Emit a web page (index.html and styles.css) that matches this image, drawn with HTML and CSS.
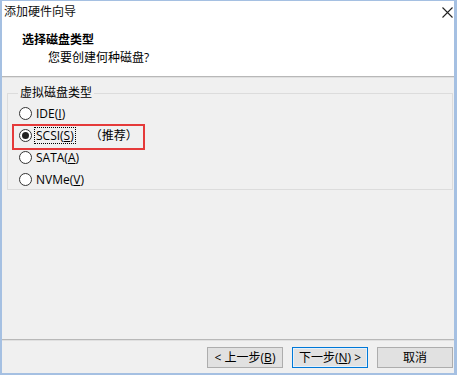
FILE: index.html
```html
<!DOCTYPE html>
<html lang="zh-CN">
<head>
<meta charset="utf-8">
<title>添加硬件向导</title>
<link rel="stylesheet" href="styles.css">
</head>
<body>
<div class="window">
  <div class="header">
    <div class="titlebar">
      <span class="title">添加硬件向导</span>
      <svg class="close" width="11" height="11" viewBox="0 0 11 11"><path d="M0.5 0.5 L10.5 10.5 M10.5 0.5 L0.5 10.5" stroke="#222" stroke-width="1.1" fill="none"/></svg>
    </div>
    <div class="heading">选择磁盘类型</div>
    <div class="subheading">您要创建何种磁盘?</div>
  </div>
  <div class="sep"></div>
  <div class="body">
    <fieldset class="group">
      <legend>虚拟磁盘类型</legend>
      <div class="row"><span class="radio"></span><span class="label">IDE(<u>I</u>)</span></div>
      <div class="row"><span class="radio checked"></span><span class="label focus">SCSI(<u>S</u>)</span><span class="rec">（推荐）</span></div>
      <div class="row"><span class="radio"></span><span class="label">SATA(<u>A</u>)</span></div>
      <div class="row"><span class="radio"></span><span class="label">NVMe(<u>V</u>)</span></div>
      <div class="highlight"></div>
    </fieldset>
  </div>
  <div class="sep"></div>
  <div class="footer">
    <button class="btn">&lt; 上一步(<u>B</u>)</button>
    <button class="btn primary">下一步(<u>N</u>) &gt;</button>
    <button class="btn">取消</button>
  </div>
</div>
</body>
</html>
```
FILE: styles.css
```css
html, body {
  margin: 0;
  padding: 0;
  background: #f0f0f0;
}
body {
  font-family: "Open Sans", "Noto Sans CJK SC", sans-serif;
  font-size: 12px;
  color: #000;
}
.window {
  width: 457px;
  height: 375px;
  box-sizing: border-box;
  border: 2px solid #a5c0e2;
  border-top-width: 1px;
  border-right-width: 3px;
  display: flex;
  flex-direction: column;
  background: #f0f0f0;
}
.header {
  background: #fff;
  height: 75px;
  flex: none;
}
.titlebar {
  display: flex;
  justify-content: space-between;
  align-items: center;
  height: 22px;
  padding: 0 1px 0 2px;
}
.title {
  line-height: 22px;
  color: #111;
}
.heading {
  font-weight: bold;
  margin: 9px 0 0 20px;
  line-height: 16px;
}
.subheading {
  margin: 2px 0 0 46px;
  line-height: 16px;
}
.sep {
  flex: none;
  height: 1px;
  border-top: 1px solid #b8b8b8;
  background: #e0e0e0;
}
.body {
  flex: 1;
  padding: 7px 0 0 5px;
}
.group {
  position: relative;
  margin: 0;
  width: 446px;
  height: 105px;
  box-sizing: border-box;
  border: 1px solid #dcdcdc;
  padding: 1px 0 0 11px;
}
.group legend {
  padding: 0 2px;
  margin-left: -1px;
  line-height: 16px;
}
.row {
  display: flex;
  align-items: center;
  height: 22px;
}
.radio {
  width: 11px;
  height: 11px;
  border: 1px solid #333;
  border-radius: 50%;
  background: #fff;
  box-sizing: content-box;
  display: flex;
  align-items: center;
  justify-content: center;
  margin-right: 3px;
}
.radio.checked::after {
  content: "";
  width: 7px;
  height: 7px;
  border-radius: 50%;
  background: #222;
}
.label {
  line-height: 15px;
  padding: 0 1px;
}
.label.focus {
  outline: 1px dotted #000;
}
.rec {
  margin-left: 15px;
}
.highlight {
  position: absolute;
  left: 4px;
  top: 23px;
  width: 133px;
  height: 26px;
  box-sizing: border-box;
  border: 2px solid #e53a3a;
}
.footer {
  flex: none;
  height: 32px;
  display: flex;
  justify-content: flex-end;
  align-items: flex-start;
  gap: 9px;
  padding: 6px 1px 0 0;
  box-sizing: border-box;
}
.btn {
  width: 76px;
  height: 21px;
  box-sizing: border-box;
  border: 1px solid #adadad;
  background: #e1e1e1;
  font-family: "Open Sans", "Noto Sans CJK SC", sans-serif;
  font-size: 12px;
  color: #000;
  padding: 0;
  line-height: 18px;
}
.btn.primary {
  border: 1px solid #0078d7;
  box-shadow: inset 0 0 0 1px #e5f1fb;
}
```
